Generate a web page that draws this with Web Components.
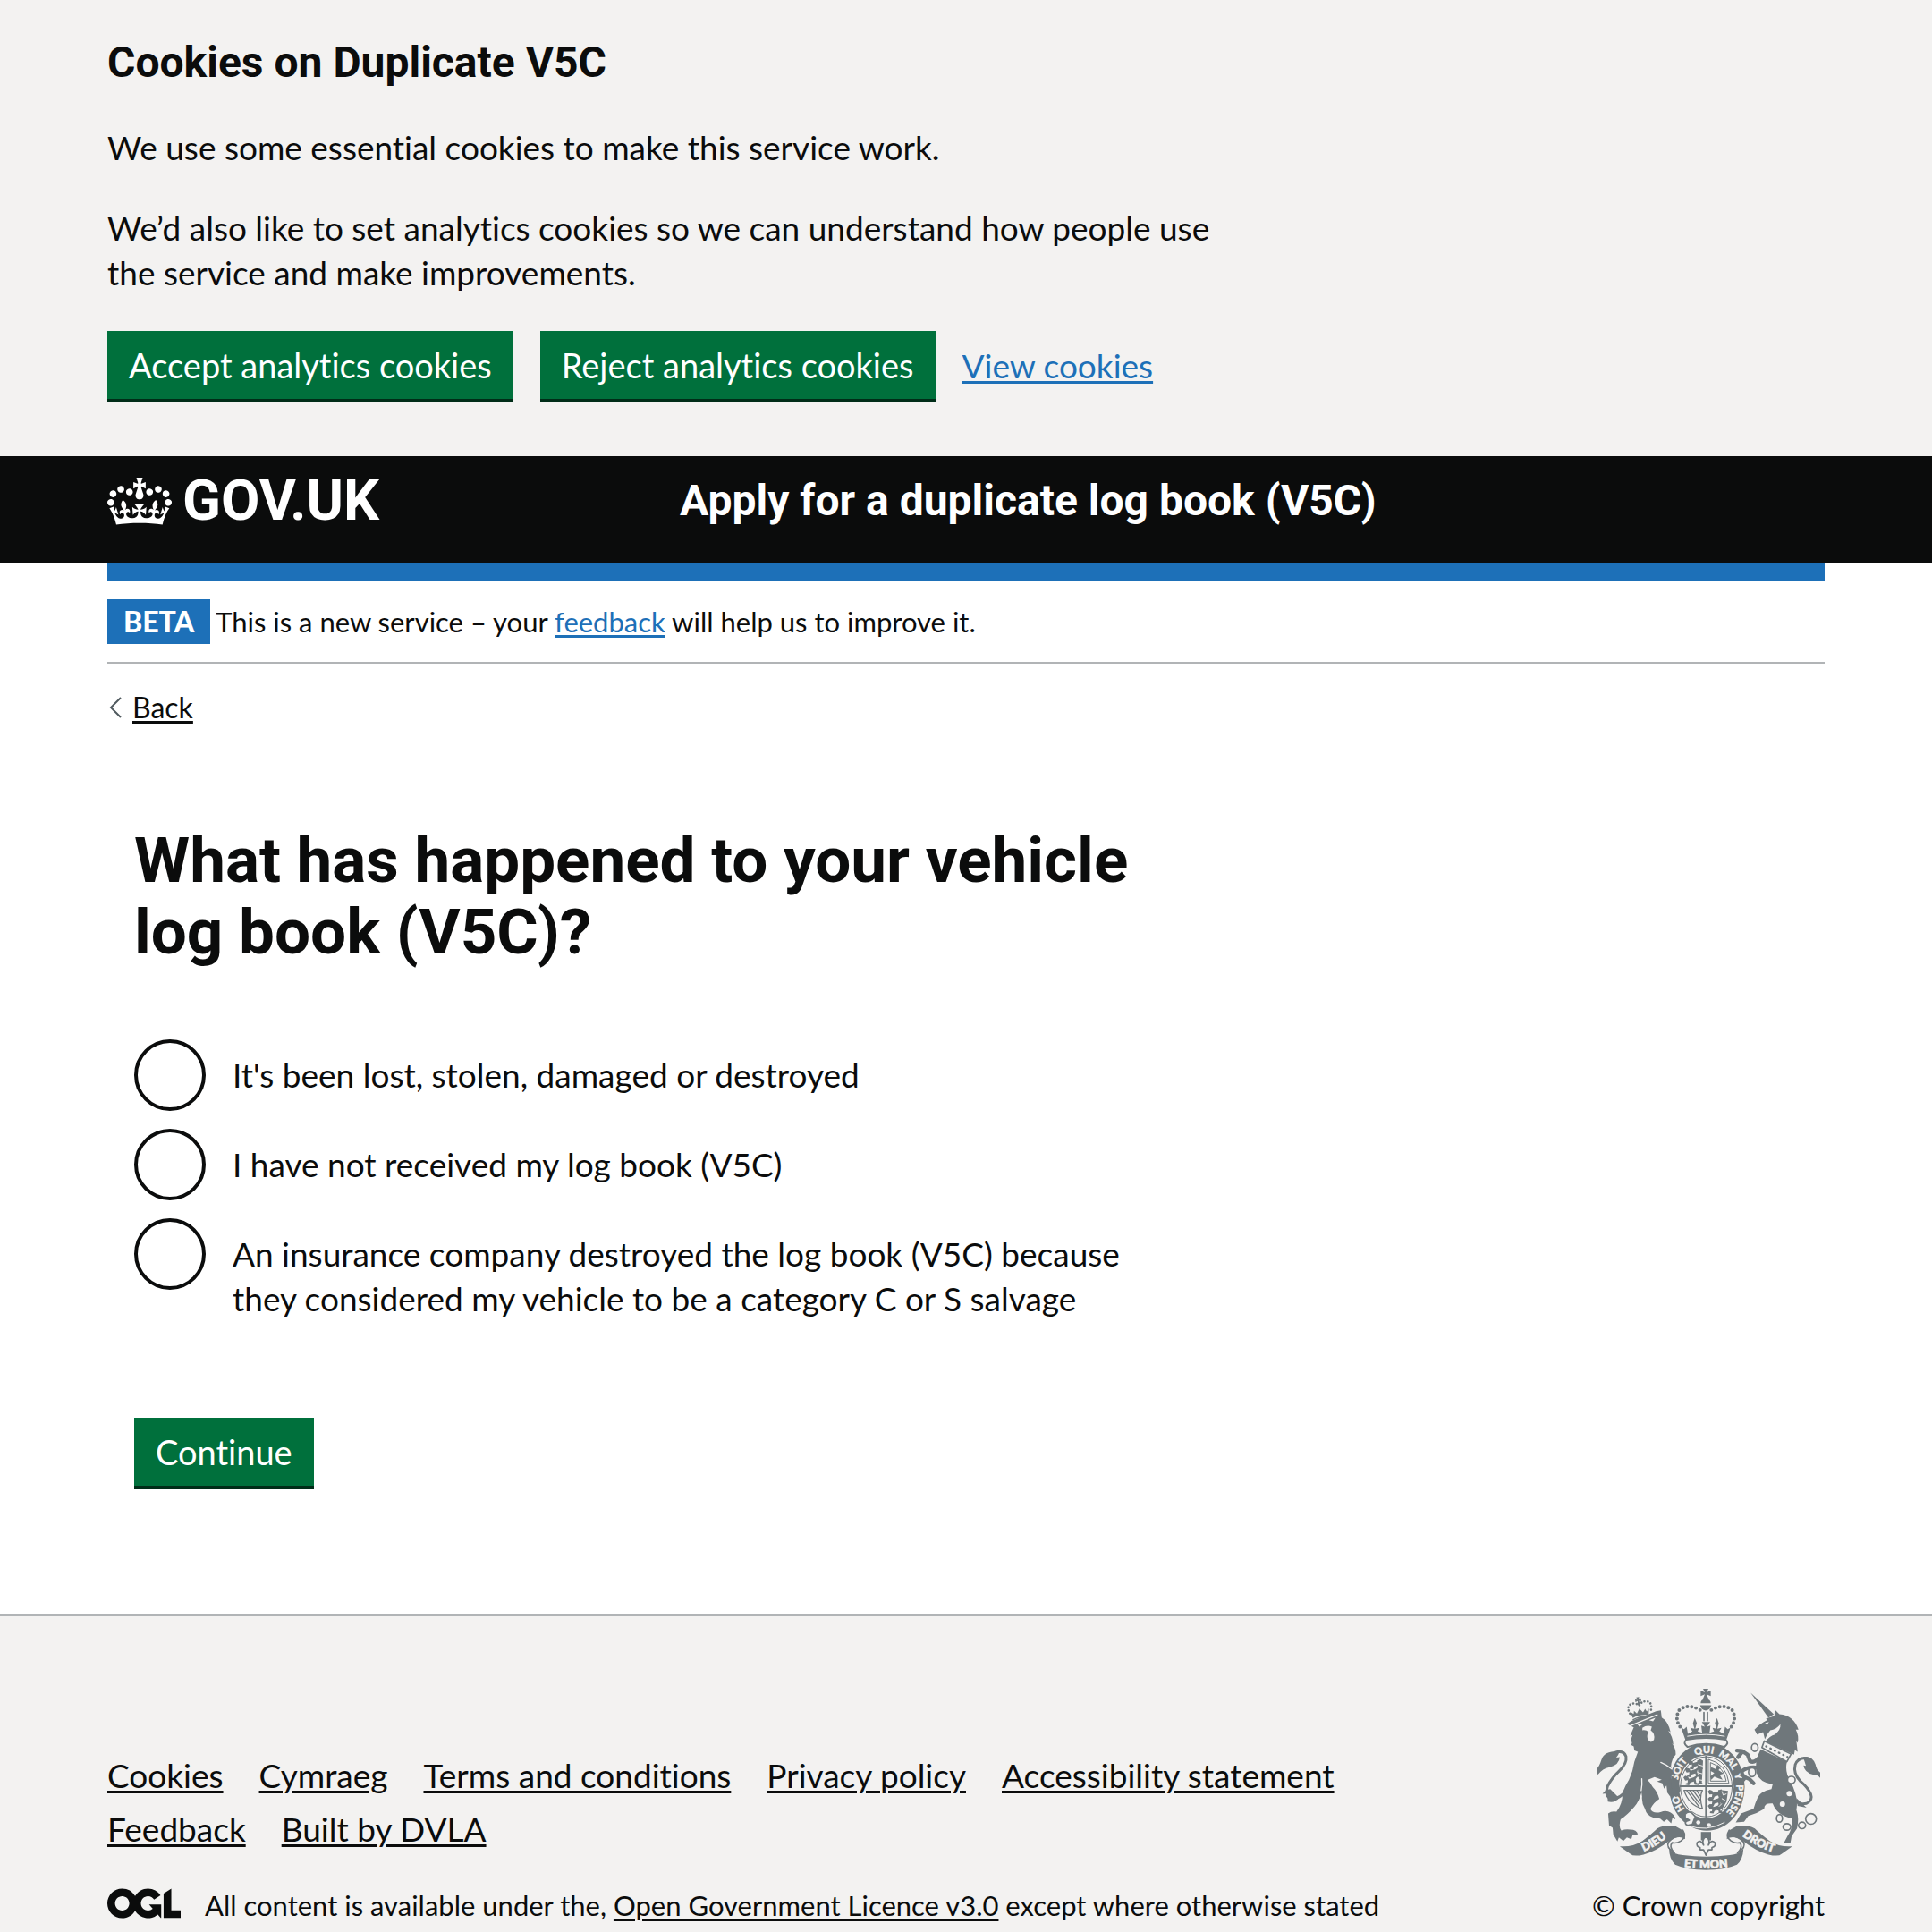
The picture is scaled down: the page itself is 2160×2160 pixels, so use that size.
<!DOCTYPE html>
<html lang="en">
<head>
<meta charset="utf-8">
<title>What has happened to your vehicle log book (V5C)?</title>
<style>
  :root {
    --ink: #0b0c0c; --grey: #f3f2f1; --rule: #b1b4b6; --blue: #1d70b8;
    --green: #00703c; --green-edge: #002d18; --arms: #6f777b;
    --heading: Roboto, "Liberation Sans", sans-serif;
  }
  body {
    margin: 0; min-height: 100vh; display: flex; flex-direction: column;
    background: #fff; color: var(--ink);
    font: 37px/50px Lato, "Liberation Sans", sans-serif;
    font-variant-ligatures: none;
  }
  site-footer { flex: 1; }
</style>
</head>
<body>
  <cookie-banner service="Duplicate V5C">
    <p>We use some essential cookies to make this service work.</p>
    <p>We’d also like to set analytics cookies so we can understand how people use the service and make improvements.</p>
    <gov-button slot="actions">Accept analytics cookies</gov-button>
    <gov-button slot="actions">Reject analytics cookies</gov-button>
    <gov-link slot="actions" to="#cookies">View cookies</gov-link>
  </cookie-banner>
  <site-header>Apply for a duplicate log book (V5C)</site-header>
  <page-width>
    <phase-banner phase="BETA">This is a new service – your <gov-link to="#feedback">feedback</gov-link> will help us to improve it.</phase-banner>
    <back-link></back-link>
    <question-form></question-form>
  </page-width>
  <site-footer></site-footer>

<script>
const define = (name, markup, setup) => {
  const template = document.createElement('template');
  template.innerHTML = markup;
  customElements.define(name, class extends HTMLElement {
    constructor() {
      super();
      this.attachShadow({ mode: 'open' }).append(template.content.cloneNode(true));
    }
    connectedCallback() { if (setup) setup(this, this.shadowRoot); }
  });
};

define('page-width', `
<style>
  :host { display: block; box-sizing: border-box; width: 100%; max-width: 2160px; margin: 0 auto; padding: 0 120px; }
</style><slot></slot>`);

define('gov-link', `
<style>
  :host { display: inline; color: var(--blue); }
  :host([dark]) { color: var(--ink); }
  a { color: inherit; text-decoration: underline; text-decoration-thickness: 3px; text-underline-offset: 3px; }
</style><a><slot></slot></a>`,
(el, root) => { root.querySelector('a').href = el.getAttribute('to') || '#'; });

define('gov-button', `
<style>
  :host { display: block; }
  button {
    display: block; border: 0; margin: 0 0 4px; padding: 13px 24px; cursor: pointer;
    background: var(--green); color: #fff; box-shadow: 0 4px 0 var(--green-edge);
    font: inherit; font-variant-ligatures: none; font-size: 38px; line-height: 50px; border-radius: 0;
  }
</style><button type="button"><slot></slot></button>`);

define('cookie-banner', `
<style>
  :host { display: block; background: var(--grey); padding: 40px 0 60px; }
  h2 { margin: 0 0 40px; font: 700 48px/60px var(--heading); }
  .message { display: grid; gap: 40px; max-width: 1280px; }
  ::slotted(p) { margin: 0; }
  .actions { display: flex; flex-wrap: wrap; align-items: baseline; gap: 30px; margin-top: 40px; }
</style>
<page-width>
  <h2>Cookies on <span></span></h2>
  <div class="message"><slot></slot></div>
  <div class="actions"><slot name="actions"></slot></div>
</page-width>`,
(el, root) => { root.querySelector('span').textContent = el.getAttribute('service'); });

define('site-header', `
<style>
  :host { display: block; background: var(--ink); color: #fff; }
  header { display: grid; grid-template-columns: 1fr 2fr; padding: 15px 0 35px; }
  a { display: flex; align-items: center; gap: 12px; color: inherit; text-decoration: none; font: 700 63px/70px var(--heading); }
  svg { display: block; fill: currentColor; }
  .title { font: 700 48px/70px var(--heading); }
</style>
<page-width><header>
  <a href="#">
    <svg width="72" height="53" viewBox="0 0 132 97" aria-hidden="true"><path d="M25 30.2c3.5 1.5 7.7-.2 9.1-3.7 1.5-3.6-.2-7.8-3.9-9.2-3.6-1.4-7.6.3-9.1 3.9-1.4 3.5.3 7.5 3.9 9zM9 39.5c3.6 1.5 7.8-.2 9.2-3.7 1.5-3.6-.2-7.8-3.9-9.1-3.6-1.5-7.6.2-9.1 3.8-1.4 3.5.3 7.5 3.8 9zM4.4 57.2c3.5 1.5 7.7-.2 9.1-3.8 1.5-3.6-.2-7.7-3.9-9.1-3.5-1.5-7.6.3-9.1 3.8-1.4 3.5.3 7.6 3.9 9.1zm38.3-21.4c3.5 1.5 7.7-.2 9.1-3.8 1.5-3.6-.2-7.7-3.9-9.1-3.6-1.5-7.6.3-9.1 3.8-1.3 3.6.4 7.7 3.9 9.1zm64.4-5.6c-3.6 1.5-7.8-.2-9.1-3.7-1.5-3.6.2-7.8 3.8-9.2 3.6-1.4 7.7.3 9.2 3.9 1.3 3.5-.4 7.5-3.9 9zm15.9 9.3c-3.6 1.5-7.7-.2-9.1-3.7-1.5-3.6.2-7.8 3.7-9.1 3.6-1.5 7.7.2 9.2 3.8 1.5 3.5-.3 7.5-3.8 9zm4.7 17.7c-3.6 1.5-7.8-.2-9.2-3.8-1.5-3.6.2-7.7 3.9-9.1 3.6-1.5 7.7.3 9.2 3.8 1.3 3.5-.4 7.6-3.9 9.1zM89.3 35.8c-3.6 1.5-7.8-.2-9.2-3.8-1.4-3.6.2-7.7 3.9-9.1 3.6-1.5 7.7.3 9.2 3.8 1.4 3.6-.3 7.7-3.9 9.1zM69.7 17.7l8.9 4.7V9.3l-8.9 2.8c-.2-.3-.5-.6-.9-.9L72.4 0H59.6l3.5 11.2c-.3.3-.6.5-.9.9l-8.8-2.8v13.1l8.8-4.7c.3.3.6.7.9.9l-5 15.4v.1c-.2.8-.4 1.6-.4 2.4 0 4.1 3.1 7.5 7 8.1h.2c.3 0 .7.1 1 .1.4 0 .7 0 1-.1h.2c4-.6 7.1-4.1 7.1-8.1 0-.8-.1-1.7-.4-2.4V34l-5.1-15.4c.4-.2.7-.6 1-.9zM66 92.8c16.9 0 32.8 1.1 47.1 3.2 4-16.9 8.9-26.7 14-33.5l-9.6-3.4c1 4.9 1.1 7.2 0 10.2-1.5-1.4-3-4.3-4.2-8.7L108.6 76c2.8-2 5-3.2 7.5-3.3-4.4 9.4-10 11.9-13.6 11.2-4.3-.8-6.3-4.6-5.6-7.9 1-4.7 5.7-5.9 8-.5 4.3-8.7-3-11.4-7.6-8.8 7.1-7.2 7.9-13.5 2.1-21.1-8 6.1-8.1 12.3-4.5 20.8-4.7-5.4-12.1-2.5-9.5 6.2 3.4-5.2 7.9-2 7.2 3.1-.6 4.3-6.4 7.8-13.5 7.2-10.3-.9-10.9-8-11.2-13.8 2.5-.5 7.1 1.8 11 7.3L80.2 60c-4.1 4.4-8 5.3-12.3 5.4 1.4-4.4 8-11.6 8-11.6H55.5s6.4 7.2 7.9 11.6c-4.2-.1-8-1-12.3-5.4l1.4 16.4c3.9-5.5 8.5-7.7 10.9-7.3-.3 5.8-.9 12.8-11.1 13.8-7.2.6-12.9-2.9-13.5-7.2-.7-5 3.8-8.3 7.1-3.1 2.7-8.7-4.6-11.6-9.4-6.2 3.7-8.5 3.6-14.7-4.6-20.8-5.8 7.6-5 13.9 2.2 21.1-4.7-2.6-11.9.1-7.7 8.8 2.3-5.5 7.1-4.2 8.1.5.7 3.3-1.3 7.1-5.7 7.9-3.5.7-9-1.8-13.5-11.2 2.5.1 4.7 1.3 7.5 3.3l-4.7-15.4c-1.2 4.4-2.7 7.2-4.3 8.7-1.1-3-.9-5.3 0-10.2l-9.5 3.4c5 6.9 9.9 16.7 14 33.5 14.8-2.1 30.8-3.2 47.7-3.2z"/></svg>
    <span>GOV.UK</span>
  </a>
  <div class="title"><slot></slot></div>
</header></page-width>`);

define('phase-banner', `
<style>
  :host { display: flex; align-items: center; gap: 6px; padding: 20px 0; border-top: 20px solid var(--blue); border-bottom: 2px solid var(--rule); font-size: 31px; line-height: 50px; }
  strong { background: var(--blue); color: #fff; padding: 0 18px; font-size: 32px; font-weight: 900; }
</style><strong></strong><span><slot></slot></span>`,
(el, root) => { root.querySelector('strong').textContent = el.getAttribute('phase'); });

define('back-link', `
<style>
  :host { display: flex; align-items: center; gap: 12px; padding-left: 2px; margin-top: 29px; font-size: 32px; line-height: 40px; }
  svg { display: block; fill: none; stroke: #505a5f; stroke-width: 2; }
</style>
<svg width="14" height="24" viewBox="0 0 14 24" aria-hidden="true"><path d="M13 1 2 12l11 11"/></svg>
<gov-link dark to="#back">Back</gov-link>`);

define('question-form', `
<style>
  :host { display: block; padding: 111px 30px 140px; }
  form { max-width: 1200px; }
  fieldset { border: 0; margin: 0; padding: 0; min-width: 0; }
  legend { padding: 0; }
  h1 { margin: 0 0 80px; font: 700 71px/80px var(--heading); }
  .options { display: grid; gap: 20px; margin-bottom: 108px; }
  .option { display: flex; align-items: flex-start; gap: 30px; }
  input { appearance: none; flex: none; box-sizing: border-box; width: 80px; height: 80px; margin: 0; border: 4px solid var(--ink); border-radius: 50%; background: #fff; }
  input:checked { background: radial-gradient(var(--ink) 20px, #fff 21px); }
  label { padding-top: 15px; max-width: 1040px; }
  gov-button { width: fit-content; }
</style>
<form>
  <fieldset>
    <legend><h1>What has happened to your vehicle log book (V5C)?</h1></legend>
    <div class="options">
      <div class="option"><input type="radio" name="reason" id="lost"><label for="lost">It's been lost, stolen, damaged or destroyed</label></div>
      <div class="option"><input type="radio" name="reason" id="missing"><label for="missing">I have not received my log book (V5C)</label></div>
      <div class="option"><input type="radio" name="reason" id="insurer"><label for="insurer">An insurance company destroyed the log book (V5C) because they considered my vehicle to be a category C or S salvage</label></div>
    </div>
  </fieldset>
  <gov-button>Continue</gov-button>
</form>`);

define('royal-arms', `
<style>
  :host { display: block; width: 250px; height: 204px; }
  svg { display: block; width: 100%; height: 100%; overflow: visible; fill: var(--arms); stroke-linecap: round; stroke-linejoin: round; }
  .line { fill: none; stroke: var(--arms); }
  .void { fill: var(--grey); }
  .cut { fill: none; stroke: var(--grey); }
  text { font: 900 38px Lato, sans-serif; fill: var(--grey); stroke: var(--grey); stroke-width: 2; text-anchor: middle; }
  .garter { font-size: 33px; stroke-width: 1; }
</style>
<svg viewBox="40 50 752 612" role="img" aria-label="Royal coat of arms">
  <defs>
    <path id="ring" d="M411 495A99 113 0 0 1 411 269A99 113 0 0 1 411 495"/>
    <path id="left" d="M174 608Q236 590 296 536"/>
    <path id="mid" d="M305 648Q408 664 511 648"/>
    <path id="right" d="M512 534Q580 590 656 608"/>
    <g id="leopard"><path d="M0 6l6-6 9 3 4 7 16-5 10-7 3 4-7 9 2 12 8 4v4l-13-1-3-11-12 4-4 9-12-2 1-5 6-1 1-9-9 1z"/></g>
  </defs>

  <!-- lion -->
  <path d="M142 170l18-10 80-32 16-3 3 24q22 12 30 50l-8-6q16 22 17 48l-5-5q14 18 13 38-14 14-16 40l12 32 16 28-4 28-12 14-10-22-5 20-9-12-3-24-8 10-6-18-18-6 16-6-24-9-24 10q10 8 18 24 16 16 22 40-20 12-30 34 8 16 34 10 20-8 34 2 14 8 16 22l-10-4-4 18-14-14-11 9-12-11-24-4q-22-6-27-28-12-20-10-42l-2-14q-8 30-24 48-26 30-46 42-8 24 2 38 16-6 30-3 22 0 26 16l-18 2-4 14-15-6-12 12-15-12-5 14-14-24-2-22-12-8-3-40q12-10 28-6 22-30 20-64 10-26 22-44 14-30 18-60l12-34-12-4-2-14-8-4 2-10-6-2 8-22-8 2 12-28z"/>
  <path class="cut" stroke-width="4" d="M256 300q44 18 62 56M150 178l94-38M190 395q4-24 2-40"/>
  <path class="void" d="M176 170l20 0-12 10zM216 158l22-8-8 12zM194 184q16-12 32-4l-4 12q16 12 11 32-10 14-20 0-6-14 2-26-8-8-21-6z"/>
  <path class="line" stroke-width="9" d="M143 392q-30 36-58 30-18-12-8-42 14-28 38-50 28-26 24-50-8-22-36-14"/>
  <path d="M118 262q-54-2-62 30-6 20-16 30l4 20q16-22 40-26 32-8 34-34l-12 2q8-10 12-22z"/>
  <path d="M86 390q-18 2-26 16l16-2 2 28q22 6 38-12z"/>
  <g transform="rotate(-10 185 120)">
    <path d="M157 146l-5-22 10 9 3-10 8 11 11-15 10 15 9-11 4 10 9-9-5 22q-28-8-54 0z"/>
    <path class="line" stroke-width="8" stroke-dasharray="0 11" d="M150 130q-10-28 14-32 14 2 22 10 6-10 22-10 24 4 14 32"/>
    <path d="M180 80h10l-3 8 8-2v9l-8-2 3 14h-10l3-14-8 2v-9l8 2z"/>
    <path class="line" stroke-width="4" d="M157 152q26-8 55 0"/>
  </g>

  <!-- great crown -->
  <path d="M398 52h18l-6 12 14-6v19l-14-6 6 14h-18l6-14-14 6V58l14 6zM390 101q0-13 17-15 17 2 17 15zM388 108h38q-4 16-19 18-15-2-19-18z"/>
  <path class="line" stroke-width="12" stroke-dasharray="0 15" d="M388 124q-42-24-70 0-20 34 12 68M426 124q42-24 70 0 20 34-12 68"/>
  <path class="line" stroke-width="5" d="M401 132v28M413 132v28"/>
  <path d="M340 228l-16-46 10 6 9-8 4 24 15-8-7-12 14 3-5-18 6-18 7 16-5 20 13-3-5 12 15 4-3-24 12 4-10-16h28l-11 16 12-4-3 24 15-4-5-12 13 3-5-20 7-16 6 18-5 18 14-3-7 12 15 8 4-24 9 8 10-6-16 46q-68-14-134 0z"/>
  <path class="cut" stroke-width="3" d="M346 212q62-12 124 0"/>

  <!-- garter and shield -->
  <ellipse cx="411" cy="382" rx="127" ry="148"/>
  <path fill="var(--grey)" stroke="var(--arms)" stroke-width="6" d="M346 248q-18-14-4-24 66-12 132 0 14 10-4 24-62-20-124 0z"/>
  <ellipse class="void" cx="409" cy="382" rx="92" ry="106"/>
  <ellipse class="line" cx="409" cy="382" rx="87" ry="101" stroke-width="3"/>
  <path class="line" stroke-width="6" d="M408 280v202M321 380h174"/>
  <use href="#leopard" x="346" y="292"/><use href="#leopard" x="337" y="318"/><use href="#leopard" x="332" y="345"/>
  <path d="M378 294l10-6 10 6-4 74 6 6h-22l6-8z"/>
  <path class="cut" stroke-width="3" d="M382 308l14 4M380 334l14 4M380 358l14 2"/>
  <path class="line" stroke-width="3" d="M417 290q60 14 68 80h-68zM424 301q46 16 52 62h-52z"/>
  <path d="M426 316l14 6 6-14 12 8-8 10 18 12-14 4 10 16-14-4-14-6-10 10-4-10 14-12-14-8z"/>
  <path class="line" stroke-width="4" d="M334 394l62 0q-12 22 0 62-46-12-62-62zM344 396l40 52M354 396l32 42M366 396l22 30M378 396l10 16"/>
  <use href="#leopard" x="414" y="392"/><use href="#leopard" x="414" y="416"/><use href="#leopard" x="414" y="440"/>
  <path d="M450 392l32 4-5 36-14 24-18 6 4-20 12-2-12-12 10-12-12-6z"/>
  <path class="cut" stroke-width="3" d="M462 398l4 12 10-4M462 422l10 6M460 440l-8 8"/>
  <text class="garter"><textPath href="#ring" startOffset="112">HO</textPath></text>
  <text class="garter"><textPath href="#ring" startOffset="224">SOIT</textPath></text>
  <text class="garter"><textPath href="#ring" startOffset="324">QUI</textPath></text>
  <text class="garter"><textPath href="#ring" startOffset="407">MAL</textPath></text>
  <text class="garter"><textPath href="#ring" startOffset="466">Y</textPath></text>
  <text class="garter"><textPath href="#ring" startOffset="543">PENSE</textPath></text>
  <path d="M290 344l24 16 8 34-14 24-10-10-6-22z"/>
  <path class="cut" stroke-width="3" d="M346 512q64 24 124-10"/>
  <path fill="var(--grey)" stroke="var(--arms)" stroke-width="5" d="M338 474q10-12 22-4l12 12-10 26-16 4q-12-6-4-14l10-4-14-8z"/>
  <circle class="void" cx="382" cy="502" r="7"/><circle class="void" cx="418" cy="511" r="7"/>

  <!-- unicorn -->
  <path d="M558 66l78 72-18 12z"/>
  <path d="M610 152l28-8 1-22 16 16q48 4 64 52l-9 0q12 22 6 44l-4-6 4 36-9-6-3 16-96-44q14-20 32-24 20-16 18-34-14 18-34 20-12 14-18 30l-6-24-20 8-9-16q20-22 42-32z"/>
  <path class="void" d="M606 168l14-4-6 8z"/>
  <path d="M592 256l88 42q-8 34 12 66 28 52 20 96 10 28 2 62l-18 26-4 22-22 0 12-22q20-30 14-60-48-8-64-50-30-2-28 18-24 16-54 24l-14 20-28 2 18-30 42-16q6-20 14-38 8-20 46-28l4-16q-44-6-54-38-8-38 14-80z"/>
  <path class="line" stroke-width="13" d="M590 280q-18 24-34 16l-8-22-18-12-18-2M584 318q-34-6-56 12 0 20 26 26l14 14M530 264l-14 18M540 350l-10 12"/>
  <path fill="var(--grey)" stroke="var(--arms)" stroke-width="5" d="M604 228l90 44-14 26-84-48z"/>
  <path class="line" stroke-width="7" stroke-dasharray="2 14" d="M610 246l72 36"/>
  <path class="line" stroke-width="9" d="M706 420q6 24 40 18 22-10 14-32-10-22-34-42-26-28-18-56 10-26 40-22"/>
  <path d="M734 282q30-6 42 24 4 20 16 28v18q-8-10-22-10-32-8-34-32l8 2q-4-16-10-30zM712 420l34 32-30-6z"/>
  <g class="line" stroke-width="5">
    <ellipse cx="572" cy="250" rx="11" ry="13" fill="var(--grey)"/><ellipse cx="563" cy="333" rx="12" ry="15" fill="var(--grey)"/>
    <ellipse cx="695" cy="359" rx="13" ry="12" fill="var(--grey)"/>
    <ellipse cx="655" cy="488" rx="10" ry="13"/><ellipse cx="680" cy="517" rx="13" ry="11"/>
    <ellipse cx="731" cy="512" rx="12" ry="11"/><circle cx="761" cy="490" r="18"/>
  </g>
  <circle class="void" cx="688" cy="405" r="9"/><circle class="void" cx="665" cy="440" r="9"/>

  <!-- pendant and motto -->
  <path d="M391 534h34v28h-34z"/>
  <path fill="var(--grey)" stroke="var(--arms)" stroke-width="5" d="M408 548q16 14 8 30 10-20 22-8 4 14-10 16l0 8h-12l-8 18-8-18h-12v-8q-14-2-10-16 12-12 22 8-8-16 8-30z"/>
  <path fill="var(--grey)" stroke="var(--arms)" stroke-width="5" d="M330 528q14 22-6 36-16 10-30 6-12 14 8 34-30-18-20-36 20-24 48-20zM486 528q-14 22 6 36 16 10 30 6 12 14-8 34 30-18 20-36-20-24-48-20z"/>
  <path d="M118 582q40 4 76-18 34-26 50-42 26-14 60-8l28 16q8 14 6 28-22-16-54 6-44 34-86 46-34 8-44-2zM698 582q-40 4-76-18-34-26-50-42-26-14-60-8l-28 16q-8 14-6 28 22-16 54 6 44 34 86 46 34 8 44-2z"/>
  <path d="M284 590q14 20 46 22 78 10 158 0 32-2 46-22-2 38-22 54-40 18-104 18t-104-18q-20-20-20-54z"/>
  <text><textPath href="#left" startOffset="50%">DIEU</textPath></text>
  <text><textPath href="#mid" startOffset="50%">ET MON</textPath></text>
  <text><textPath href="#right" startOffset="50%">DROIT</textPath></text>
</svg>`);

define('site-footer', `
<style>
  :host { display: block; background: var(--grey); border-top: 2px solid var(--rule); }
  footer { display: flex; justify-content: space-between; align-items: flex-end; gap: 60px; padding: 80px 0 10px; }
  .meta { flex: 1; max-width: 1500px; display: grid; gap: 35px; }
  ul { display: flex; flex-wrap: wrap; column-gap: 40px; list-style: none; margin: 0; padding: 0; line-height: 60px; }
  .licence, .copyright { font-size: 31px; line-height: 40px; }
  .licence { display: flex; gap: 27px; align-items: flex-start; }
  .licence svg { flex: none; fill: var(--ink); margin-top: 1px; }
  .copyright { display: grid; gap: 19px; justify-items: center; }
</style>
<page-width><footer>
  <div class="meta">
    <ul>
      <li><gov-link dark>Cookies</gov-link></li>
      <li><gov-link dark>Cymraeg</gov-link></li>
      <li><gov-link dark>Terms and conditions</gov-link></li>
      <li><gov-link dark>Privacy policy</gov-link></li>
      <li><gov-link dark>Accessibility statement</gov-link></li>
      <li><gov-link dark>Feedback</gov-link></li>
      <li><gov-link dark>Built by DVLA</gov-link></li>
    </ul>
    <div class="licence">
      <svg width="82" height="34" viewBox="0 0 483.2 195.7" role="img" aria-label="Open Government Licence"><path d="M421.5 142.8V.1l-50.7 32.3v161.1h112.4v-50.7zm-122.3-9.6A47.12 47.12 0 0 1 221 97.8c0-26 21.1-47.1 47.1-47.1 16.7 0 31.4 8.7 39.7 21.8l42.7-27.2A97.63 97.63 0 0 0 268.1 0c-36.5 0-68.3 20.1-85.1 49.7A98 98 0 0 0 97.8 0C43.9 0 0 43.9 0 97.8s43.9 97.8 97.8 97.8c36.5 0 68.3-20.1 85.1-49.7a97.76 97.76 0 0 0 149.6 25.4l19.4 22.2h3v-87.8h-80l24.3 27.5zM97.8 145c-26 0-47.1-21.1-47.1-47.1s21.1-47.1 47.1-47.1 47.1 21.1 47.1 47.1S123.8 145 97.8 145"/></svg>
      <span>All content is available under the, <gov-link dark>Open Government Licence v3.0</gov-link> except where otherwise stated</span>
    </div>
  </div>
  <div class="copyright"><royal-arms></royal-arms><span>© Crown copyright</span></div>
</footer></page-width>`);
</script>
</body>
</html>
